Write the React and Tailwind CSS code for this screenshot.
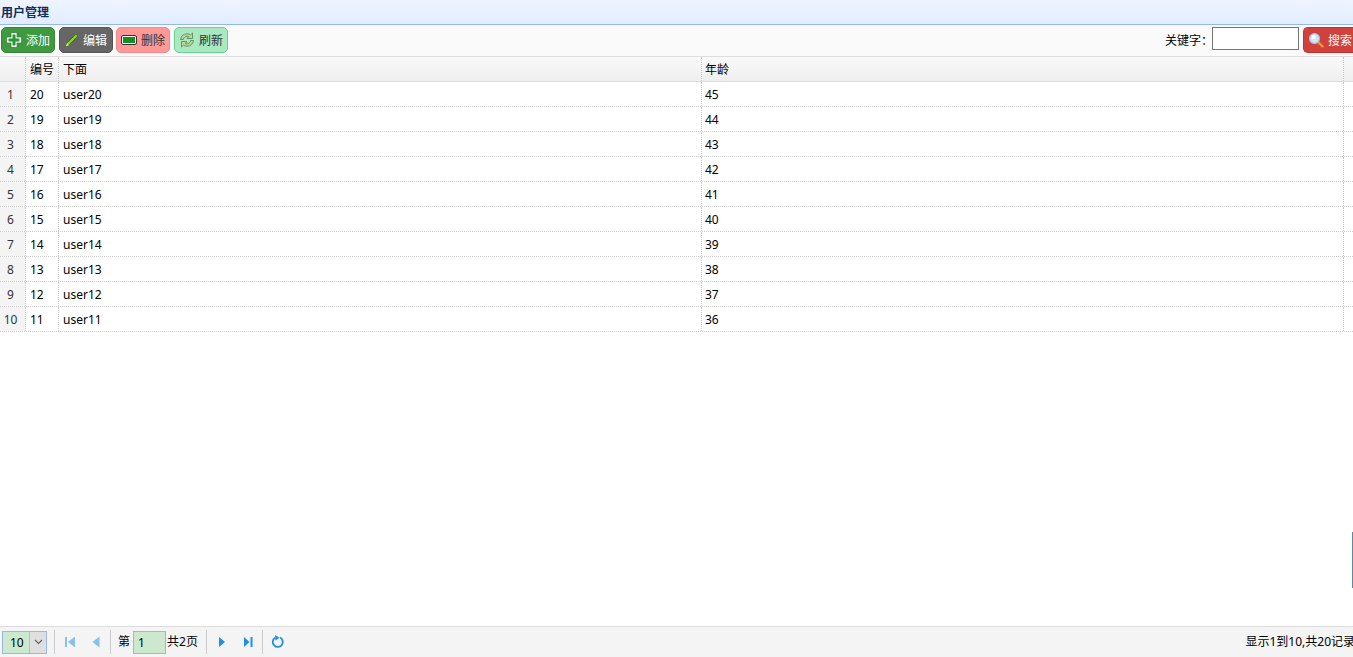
const rows = [
  [1, 20, 'user20', 45], [2, 19, 'user19', 44], [3, 18, 'user18', 43], [4, 17, 'user17', 42], [5, 16, 'user16', 41],
  [6, 15, 'user15', 40], [7, 14, 'user14', 39], [8, 13, 'user13', 38], [9, 12, 'user12', 37], [10, 11, 'user11', 36],
];

const Plus = () => (
  <svg width="16" height="16" viewBox="0 0 16 16" className="shrink-0">
    <path d="M5 .5h6V5h4.500v6H11v4.500H5V11H.5V5H5z" fill="#fff" stroke="#1f6b24" strokeWidth="0.6" strokeLinejoin="round" />
    <path d="M6.500 2.500h3v4h4v3h-4v4h-3v-4h-4v-3h4z" fill="#249a33" />
  </svg>
);
const Pencil = () => (
  <svg width="16" height="16" viewBox="0 0 16 16" className="shrink-0">
    <path d="M2 14.500l1-3.500L12 2l2 2-9 9z" fill="#7ed321" stroke="#2f6b10" strokeWidth="0.8" />
    <path d="M2 14.500l1-3.500 2 2z" fill="#f3e2a8" />
  </svg>
);
const Minus = () => (
  <svg width="16" height="16" viewBox="0 0 16 16" className="shrink-0">
    <rect x="0.500" y="3.500" width="15" height="9" rx="1.500" fill="#fff" stroke="#333" strokeWidth="1" />
    <rect x="2" y="5" width="12" height="6" fill="#168c22" />
  </svg>
);
const Refresh = () => (
  <svg width="16" height="16" viewBox="0 0 16 16" className="shrink-0">
    <path d="M1.500 7.500C2 4 4.500 1.800 8 1.800c1.500 0 2.600.4 3.500 1.100L13.500 1v5.500H8l1.800-1.800C9.300 4.300 8.700 4.200 8 4.200 6 4.200 4.800 5.500 4.300 7.500z" fill="#b8dc9c" stroke="#5b8a55" strokeWidth="0.9" strokeLinejoin="round" />
    <path d="M14.500 8.500C14 12 11.500 14.200 8 14.200c-1.500 0-2.600-.4-3.500-1.100L2.500 15V9.500H8l-1.800 1.800c.5.400 1.100.5 1.800.5 2 0 3.200-1.300 3.700-3.300z" fill="#b8dc9c" stroke="#5b8a55" strokeWidth="0.9" strokeLinejoin="round" />
  </svg>
);
const Search = () => (
  <svg width="16" height="16" viewBox="0 0 16 16" className="shrink-0">
    <path d="M10 10l4.500 4.500" stroke="#e8a020" strokeWidth="2.400" strokeLinecap="round" />
    <circle cx="6.500" cy="6.500" r="5" fill="#cfe6fa" stroke="#9fc0dc" strokeWidth="1.200" />
    <circle cx="5.500" cy="5" r="2" fill="#fff" />
  </svg>
);

function Btn({ icon, label, cls, txt, gap }) {
  return (
    <div className={`w-[54px] h-[26px] flex items-center pl-[4px] rounded-[5px] border shrink-0 ${gap} ${cls}`}>
      {icon}
      <span className={`text-[12px] pt-[2px] ${txt}`}>{label}</span>
    </div>
  );
}

const Sep = () => <div className="w-px h-[24px] bg-[#cccccc] shrink-0" />;

const PagerIcon = ({ d, op }) => (
  <svg width="16" height="16" viewBox="0 0 16 16" className={`shrink-0 ${op}`}>
    <path d={d} fill="#1e8fe1" />
  </svg>
);

export default function App() {
  return (
    <div className="relative w-[1353px] h-[657px] flex flex-col bg-white overflow-hidden font-['Noto_Sans','Noto_Sans_CJK_SC',sans-serif] text-[12px] text-black">
      <div className="h-[25px] shrink-0 border-b border-[#95b8e7] bg-gradient-to-b from-[#eff5ff] to-[#e0ecff] flex items-center pl-px">
        <span className="font-bold text-[12px] text-[#0e2d5f] leading-none mt-px">用户管理</span>
      </div>

      <div className="h-[32px] shrink-0 bg-[#fafafa] border-b border-[#dddddd] flex items-start pl-px pt-[2px]">
        <div className="flex items-center">
          <Btn gap="gap-[4px]" icon={<Plus />} label="添加" cls="bg-[#3f9a3f] border-[#398439]" txt="text-white" />
          <div className="ml-[4px]"><Btn gap="gap-[3px]" icon={<Pencil />} label="编辑" cls="bg-[#666666] border-[#555555]" txt="text-white" /></div>
          <div className="ml-[3px]"><Btn gap="gap-[4px]" icon={<Minus />} label="删除" cls="bg-[#ff9999] border-[#f28a8a]" txt="text-[#333333]" /></div>
          <div className="ml-[4px]"><Btn gap="gap-[4px]" icon={<Refresh />} label="刷新" cls="bg-[#a9e8c0] border-[#66d28e]" txt="text-[#333333]" /></div>
        </div>
        <div className="ml-auto flex items-start">
          <span className="text-[12px] whitespace-nowrap leading-[28px]">关键字：</span>
          <div className="w-[87px] h-[23px] border border-[#767676] bg-white -ml-[1px]" />
          <div className="w-[50px] h-[26px] ml-[4px] bg-[#d0403c] border border-[#c9302c] rounded-l-[5px] border-r-0 flex items-center gap-[4px] pl-[4px] overflow-hidden">
            <Search />
            <span className="text-white whitespace-nowrap pt-[2px]">搜索</span>
          </div>
        </div>
      </div>

      <div className="h-[25px] shrink-0 flex bg-gradient-to-b from-[#f9f9f9] to-[#efefef] border-b border-[#dddddd]">
        <div className="w-[26px] shrink-0 border-r border-dotted border-[#cccccc]" />
        <div className="w-[33px] shrink-0 border-r border-dotted border-[#cccccc] pl-[4px] pt-[2px] flex items-center">编号</div>
        <div className="w-[643px] shrink-0 border-r border-dotted border-[#cccccc] pl-[4px] pt-[2px] flex items-center">下面</div>
        <div className="w-[642px] shrink-0 border-r border-dotted border-[#cccccc] pl-[3px] pt-[2px] flex items-center">年龄</div>
      </div>

      <div className="flex-1 flex flex-col">
        {rows.map((r) => (
          <div key={r[0]} className="h-[25px] shrink-0 flex border-b border-dotted border-[#cccccc]">
            <div className="w-[26px] shrink-0 bg-[#f4f4f4] border-r border-dotted border-[#cccccc] pt-[2px] pr-[4px] flex items-center justify-center text-[#333333]">{r[0]}</div>
            <div className="w-[33px] shrink-0 border-r border-dotted border-[#cccccc] pl-[4px] pt-[2px] flex items-center">{r[1]}</div>
            <div className="w-[643px] shrink-0 border-r border-dotted border-[#cccccc] pl-[4px] pt-[2px] flex items-center">{r[2]}</div>
            <div className="w-[642px] shrink-0 border-r border-dotted border-[#cccccc] pl-[3px] pt-[2px] flex items-center">{r[3]}</div>
          </div>
        ))}
      </div>

      <div className="h-[31px] shrink-0 bg-[#f4f4f4] border-t border-[#dddddd] flex items-center pl-[2px] pr-0">
        <div className="w-[45px] h-[23px] flex border border-[#95b8e7] bg-[#cce8cf] shrink-0">
          <div className="flex-1 flex items-center pl-[7px] pt-px text-[12px]">10</div>
          <div className="w-[17px] bg-[#dfdfdf] border-l border-[#bbbbbb] flex items-center justify-center">
            <svg width="9" height="6" viewBox="0 0 9 6"><path d="M1 1l3.500 3.500L8 1" fill="none" stroke="#666" strokeWidth="1.200" /></svg>
          </div>
        </div>
        <div className="ml-[7px]"><Sep /></div>
        <div className="ml-[7px] flex items-center gap-[10px]">
          <PagerIcon op="opacity-50" d="M3 3h2v10H3zM13 2.500v11L6 8z" />
          <PagerIcon op="opacity-50" d="M11.500 2.500v11L4.500 8z" />
        </div>
        <div className="ml-[6px]"><Sep /></div>
        <span className="ml-[7px]">第</span>
        <div className="ml-[3px] w-[33px] h-[23px] border border-[#95b8e7] bg-[#cce8cf] flex items-center pl-[4px] pt-px shrink-0">1</div>
        <span className="ml-[1px] w-[32px] whitespace-nowrap">共2页</span>
        <div className="ml-[7px]"><Sep /></div>
        <div className="ml-[7px] flex items-center gap-[10px]">
          <PagerIcon op="" d="M5 3v10l6-5z" />
          <PagerIcon op="" d="M4 3v10l5.500-5zM10.500 3h2v10h-2z" />
        </div>
        <div className="ml-[6px]"><Sep /></div>
        <div className="ml-[7px]">
          <svg width="16" height="16" viewBox="0 0 16 16">
            <path d="M10 3.500A5 5 0 1 1 5 3.800" fill="none" stroke="#1e8fe1" strokeWidth="1.800" />
            <path d="M5 1l4.500 2.800L5.500 6.500z" fill="#1e8fe1" />
          </svg>
        </div>
        <span className="ml-auto whitespace-nowrap -mr-[2px]">显示1到10,共20记录</span>
      </div>

      <div className="absolute left-[1352px] top-[532px] w-px h-[56px] bg-[#5f87a8]" />
    </div>
  );
}
